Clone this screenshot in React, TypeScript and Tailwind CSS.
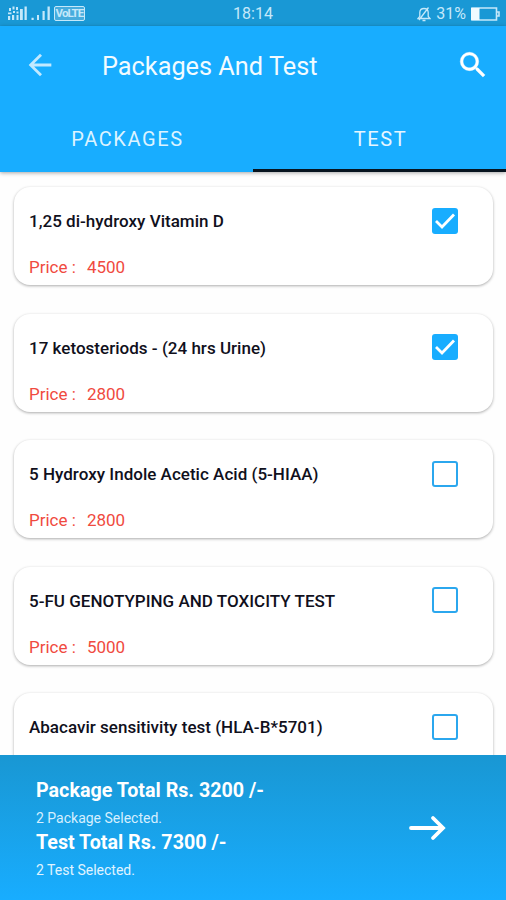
import { useState } from 'react';
import clsx from 'clsx';

interface LabTest {
  name: string;
  price?: number;
  selected: boolean;
}

const initialTests: LabTest[] = [
  { name: '1,25 di-hydroxy Vitamin D', price: 4500, selected: true },
  { name: '17 ketosteriods - (24 hrs Urine)', price: 2800, selected: true },
  { name: '5 Hydroxy Indole Acetic Acid (5-HIAA)', price: 2800, selected: false },
  { name: '5-FU GENOTYPING AND TOXICITY TEST', price: 5000, selected: false },
  { name: 'Abacavir sensitivity test (HLA-B*5701)', selected: false },
];

function SignalIcons() {
  return (
    <svg width="44" height="15" viewBox="0 0 44 15" fill="currentColor">
      <path d="M1 2h2v3H1zM4.500 0.500h2v3h-2zM8 1h2v3H8zM0 6.500h3.500v1.800H0zM5 5h2v2H5zM8.500 5.500h2v2h-2zM0 10h2.200v4H0zM4 9h2.200v5H4zM8.500 9h2v5h-2zM12 3h2.800v11H12zM16.500 0.500h2.300V14h-2.300z" />
      <path d="M23.500 11.800h2.200V14h-2.200zM29 9h2v5h-2zM34.500 5h2.200v9h-2.200zM39.500 0.500h2.300V14h-2.300z" />
    </svg>
  );
}

function StatusBar() {
  return (
    <div className="flex h-[26px] shrink-0 items-center bg-[#1998d5] pt-px pr-[6px] pl-2 text-[#c5e8fa]">
      <div className="flex flex-1 items-center">
        <SignalIcons />
        <span className="ml-[2px] flex h-[15px] w-[31px] items-center justify-center rounded-[2px] border border-current bg-white/20 text-[11.500px] leading-none font-bold tracking-[-0.900px]">
          VoLTE
        </span>
      </div>
      <span className="-ml-[2px] text-[16px]">18:14</span>
      <div className="flex flex-1 items-center justify-end">
        <svg width="14" height="16" viewBox="0 0 14 16" fill="none" stroke="currentColor" strokeWidth="1.300">
          <path d="M1 12.500h12l-1.800-2.200V6.200C11 3.800 9.300 2.500 7 2.500S3 3.800 2.800 6.200v4.100zM5.500 14.500h3M2 14L11.500 1.500" />
        </svg>
        <span className="ml-[5px] text-[16px]">31%</span>
        <svg className="ml-[5px]" width="29" height="14" viewBox="0 0 29 14" fill="none">
          <path d="M1 1h24.500v12H1zM26 5h2v4h-2" stroke="currentColor" strokeWidth="1.600" />
          <path d="M0 1h8.500v12H0z" fill="#f0faff" />
        </svg>
      </div>
    </div>
  );
}

function Header() {
  const tab =
    'flex flex-1 items-center justify-center border-b-[3px] pt-[2px] pl-[2px] text-[20px] tracking-[1.6px]';

  return (
    <header className="z-10 shrink-0 bg-[#18adff] text-white shadow-[0_1px_4px_rgba(0,0,0,0.35)]">
      <div className="flex h-[81px] items-center">
        <button type="button" className="mb-[3px] ml-[23px] text-[#c2e9ff]" aria-label="Back">
          <svg width="34" height="34" viewBox="0 0 24 24" fill="currentColor">
            <path d="M20 11H7.830l5.590-5.590L12 4l-8 8 8 8 1.410-1.410L7.830 13H20v-2z" />
          </svg>
        </button>
        <h1 className="ml-[45px] flex-1 pt-px text-[25.300px] text-[#f2fbff]">Packages And Test</h1>
        <button type="button" className="mr-[16px] mb-[4px]" aria-label="Search">
          <svg width="34" height="34" viewBox="0 0 24 24" fill="currentColor" stroke="currentColor" strokeWidth="0.3">
            <path d="M15.500 14h-.79l-.28-.27A6.471 6.471 0 0 0 16 9.500 6.500 6.500 0 1 0 9.500 16c1.610 0 3.090-.59 4.230-1.570l.27.28v.79l5 4.990L20.490 19l-4.990-5zm-6 0C7.010 14 5 11.990 5 9.500S7.010 5 9.500 5 14 7.010 14 9.500 11.990 14 9.500 14z" />
          </svg>
        </button>
      </div>
      <nav className="flex h-[65px]">
        <button type="button" className={clsx(tab, 'border-transparent text-[#dcf3ff]')}>
          PACKAGES
        </button>
        <button type="button" className={clsx(tab, 'border-[#07141f] text-[#e6f6ff]')}>
          TEST
        </button>
      </nav>
    </header>
  );
}

function Checkbox(props: { checked: boolean; onChange: () => void }) {
  return (
    <button
      type="button"
      role="checkbox"
      aria-checked={props.checked}
      onClick={props.onChange}
      className={clsx(
        'mb-[2px] flex size-[26px] items-center justify-center rounded-[3px] border-[#2ba7ee]',
        props.checked ? 'border-0 bg-[#18adff]' : 'border-[2.5px] bg-white',
      )}
    >
      {props.checked && (
        <svg className="shrink-0" width="22" height="18" viewBox="0 0 22 18" fill="none" stroke="#fff" strokeWidth="2.800">
          <path d="M2 9l6 6L20 2.500" />
        </svg>
      )}
    </button>
  );
}

function TestCard(props: { test: LabTest; onToggle: () => void }) {
  return (
    <li className="h-[98px] shrink-0 rounded-[16px] bg-white pr-[35px] pl-[15px] shadow-[0_1px_3px_rgba(0,0,0,0.33)]">
      <div className="flex h-[69px] items-center justify-between">
        <span className="pt-px text-[17px] font-medium tracking-[0.02px] text-[#10101c]">{props.test.name}</span>
        <Checkbox checked={props.test.selected} onChange={props.onToggle} />
      </div>
      {props.test.price && (
        <p className="flex gap-[11px] text-[17px] leading-[22px] text-[#f04a40]">
          <span>Price :</span>
          <span>{props.test.price}</span>
        </p>
      )}
    </li>
  );
}

function Footer() {
  return (
    <footer className="z-10 flex h-[145px] shrink-0 items-center justify-between bg-linear-to-b from-[#1997d3] to-[#18adff] pr-[60px] pl-[36px] text-white">
      <div className="flex flex-col pt-[3px]">
        <p className="text-[19.700px] leading-[28px] font-bold">Package Total Rs. 3200 /-</p>
        <p className="pt-[3px] text-[14px] leading-[21px] text-[#d5efff]">2 Package Selected.</p>
        <p className="text-[19.700px] leading-[28px] font-bold">Test Total Rs. 7300 /-</p>
        <p className="pt-[3px] text-[14px] leading-[21px] text-[#e0f4ff]">2 Test Selected.</p>
      </div>
      <button type="button" aria-label="Continue">
        <svg width="37" height="28" viewBox="0 0 37 28" fill="none" stroke="currentColor" strokeWidth="3.800" strokeLinecap="round">
          <path d="M2 14h31M24 4l10 10-10 10" />
        </svg>
      </button>
    </footer>
  );
}

export default function App() {
  const [tests, setTests] = useState(initialTests);

  const toggle = (name: string) =>
    setTests(tests.map((t) => (t.name === name ? { ...t, selected: !t.selected } : t)));

  return (
    <div className="flex h-[900px] w-[506px] flex-col overflow-hidden bg-[#fefefe] font-[Roboto,sans-serif]">
      <StatusBar />
      <Header />
      <ul className="flex min-h-0 flex-1 flex-col gap-[28.500px] overflow-hidden pt-[15px] pr-[13px] pl-[14px]">
        {tests.map((test) => (
          <TestCard key={test.name} test={test} onToggle={() => toggle(test.name)} />
        ))}
      </ul>
      <Footer />
    </div>
  );
}
